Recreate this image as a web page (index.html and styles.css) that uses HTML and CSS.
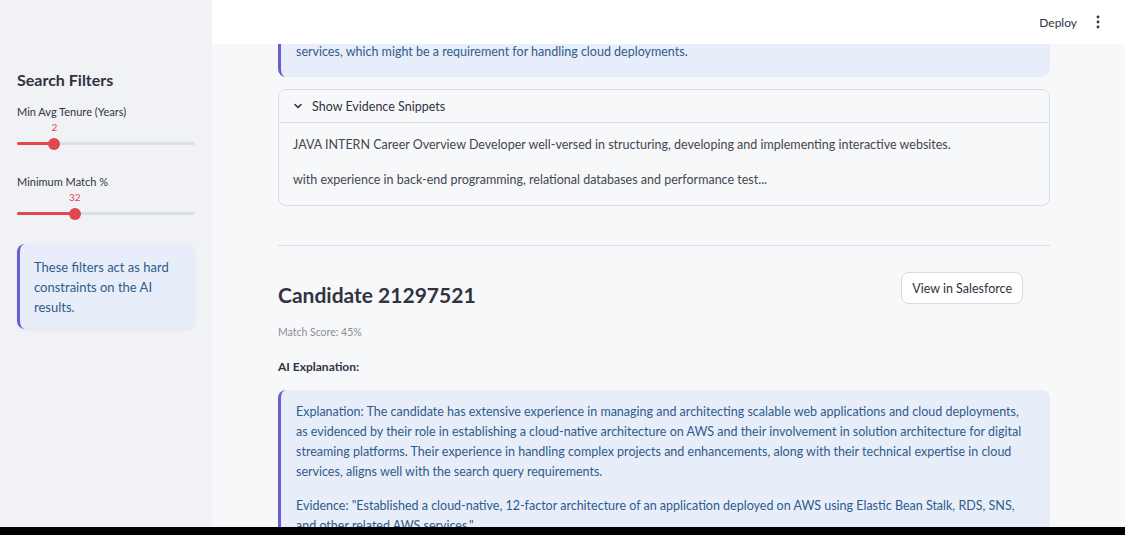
FILE: index.html
```html
<!DOCTYPE html>
<html>
<head>
<link rel="stylesheet" href="styles.css">
</head>

<body>
<div class="app">
  <aside class="sidebar">
    <h2 class="side-title">Search Filters</h2>

    <div class="slider">
      <div class="slider-label">Min Avg Tenure (Years)</div>
      <div class="slider-body">
        <span class="slider-value" style="left: 21%">2</span>
        <div class="track">
          <div class="fill" style="width: 21%"></div>
          <div class="thumb" style="left: 21%"></div>
        </div>
      </div>
    </div>

    <div class="slider">
      <div class="slider-label">Minimum Match %</div>
      <div class="slider-body">
        <span class="slider-value" style="left: 32.5%">32</span>
        <div class="track">
          <div class="fill" style="width: 32.5%"></div>
          <div class="thumb" style="left: 32.5%"></div>
        </div>
      </div>
    </div>

    <div class="callout side-callout">
      These filters act as hard constraints on the AI results.
    </div>
  </aside>

  <main class="main">
    <header class="topbar">
      <span class="deploy">Deploy</span>
      <svg class="kebab" width="4" height="14" viewBox="0 0 4 14">
        <circle cx="2" cy="2" r="1.4" fill="#31333f"/>
        <circle cx="2" cy="7" r="1.4" fill="#31333f"/>
        <circle cx="2" cy="12" r="1.4" fill="#31333f"/>
      </svg>
    </header>

    <div class="scroll">
      <div class="content">
        <div class="callout callout-cut">
          <p>services, which might be a requirement for handling cloud deployments.</p>
        </div>

        <div class="expander">
          <div class="exp-head">
            <svg width="10" height="10" viewBox="0 0 10 10">
              <path d="M2 3.5 L5 6.5 L8 3.5" fill="none" stroke="#31333f" stroke-width="1.6" stroke-linecap="round" stroke-linejoin="round"/>
            </svg>
            <span>Show Evidence Snippets</span>
          </div>
          <div class="exp-body">
            <p>JAVA INTERN Career Overview Developer well-versed in structuring, developing and implementing interactive websites.</p>
            <p>with experience in back-end programming, relational databases and performance test...</p>
          </div>
        </div>

        <hr class="divider">

        <div class="cand-head">
          <h1 class="cand-title">Candidate 21297521</h1>
          <button class="btn">View in Salesforce</button>
        </div>
        <div class="score">Match Score: 45%</div>
        <div class="section-label">AI Explanation:</div>

        <div class="callout callout-wide">
          <p>Explanation: The candidate has extensive experience in managing and architecting scalable web applications and cloud deployments, as evidenced by their role in establishing a cloud-native architecture on AWS and their involvement in solution architecture for digital streaming platforms. Their experience in handling complex projects and enhancements, along with their technical expertise in cloud services, aligns well with the search query requirements.</p>
          <p>Evidence: "Established a cloud-native, 12-factor architecture of an application deployed on AWS using Elastic Bean Stalk, RDS, SNS, and other related AWS services."</p>
        </div>
      </div>
    </div>
  </main>
</div>
</body>
</html>
```

FILE: styles.css
```css
html, body {
  margin: 0;
  height: 100%;
  background: #000;
}

body {
  font-family: Lato, "Noto Sans", sans-serif;
  color: #31333f;
}

p {
  margin: 0;
}

.app {
  display: flex;
  height: 527px;
  overflow: hidden;
}

/* sidebar */
.sidebar {
  width: 212px;
  flex-shrink: 0;
  background: #f0f2f6;
  padding: 69px 17px 0 17px;
  box-sizing: border-box;
}

.side-title {
  margin: 0 0 13px 0;
  font-size: 16px;
  line-height: 22px;
  font-weight: 700;
}

.slider {
  margin-bottom: 17px;
}

.slider-label {
  font-size: 11px;
  line-height: 16px;
}

.slider-body {
  position: relative;
  padding-top: 15px;
  height: 22px;
}

.slider-value {
  position: absolute;
  top: 1px;
  transform: translateX(-50%);
  font-size: 10px;
  line-height: 12px;
  color: #e0484e;
}

.track {
  position: relative;
  margin-top: 7px;
  height: 3px;
  border-radius: 2px;
  background: #dcdfe5;
}

.fill {
  height: 100%;
  border-radius: 2px;
  background: #e0484e;
}

.thumb {
  position: absolute;
  top: -4.5px;
  width: 12px;
  height: 12px;
  margin-left: -6px;
  border-radius: 50%;
  background: #e0484e;
}

/* callouts */
.callout {
  background: #e8eef9;
  border-left: 3px solid #6a5fd0;
  border-radius: 8px;
  color: #2f5b8b;
  font-size: 12.5px;
  line-height: 20px;
  padding: 12px 15px 15px 15px;
}

.callout p + p {
  margin-top: 14px;
}

.callout-cut {
  padding-top: 0;
  border-top-left-radius: 0;
  border-top-right-radius: 0;
}

.callout-wide {
  padding-right: 26px;
}

.side-callout {
  margin-top: 14px;
  padding: 13px 14px 12px 14px;
  font-size: 13px;
  box-shadow: 0 1px 3px rgba(0, 0, 0, 0.06);
}

/* main */
.main {
  flex: 1;
  display: flex;
  flex-direction: column;
  background: #f7f8fa;
}

.topbar {
  height: 44px;
  flex-shrink: 0;
  background: #fff;
  display: flex;
  align-items: center;
  justify-content: flex-end;
  padding-right: 25px;
  gap: 19px;
}

.deploy {
  font-size: 12px;
  color: #31333f;
}

.scroll {
  flex: 1;
  overflow: hidden;
}

.content {
  margin: -2px 75px 0 66px;
}

.expander {
  margin-top: 12px;
  border: 1px solid #d9dce2;
  border-radius: 8px;
}

.exp-head {
  height: 32px;
  display: flex;
  align-items: center;
  gap: 9px;
  padding-left: 14px;
  font-size: 12.5px;
  border-bottom: 1px solid #d9dce2;
}

.exp-body {
  padding: 12px 14px 15px 14px;
  font-size: 12.5px;
  line-height: 20px;
  color: #44464f;
}

.exp-body p + p {
  margin-top: 15px;
}

.divider {
  margin: 39px 0 0 0;
  border: none;
  border-top: 1px solid #dcdfe4;
}

.cand-head {
  margin-top: 26px;
  display: flex;
  justify-content: space-between;
  align-items: flex-start;
  padding-right: 27px;
}

.cand-title {
  margin: 9px 0 0 0;
  font-size: 21px;
  line-height: 28px;
  font-weight: 700;
}

.btn {
  height: 32px;
  padding: 0 10px;
  background: #fff;
  border: 1px solid #d6d9df;
  border-radius: 8px;
  font-family: inherit;
  font-size: 12.5px;
  color: #31333f;
}

.score {
  margin-top: 15px;
  font-size: 10.5px;
  line-height: 16px;
  color: #8a8c94;
}

.section-label {
  margin-top: 18px;
  font-size: 12px;
  font-weight: 700;
  line-height: 18px;
}

.section-label + .callout {
  margin-top: 14px;
}
```
